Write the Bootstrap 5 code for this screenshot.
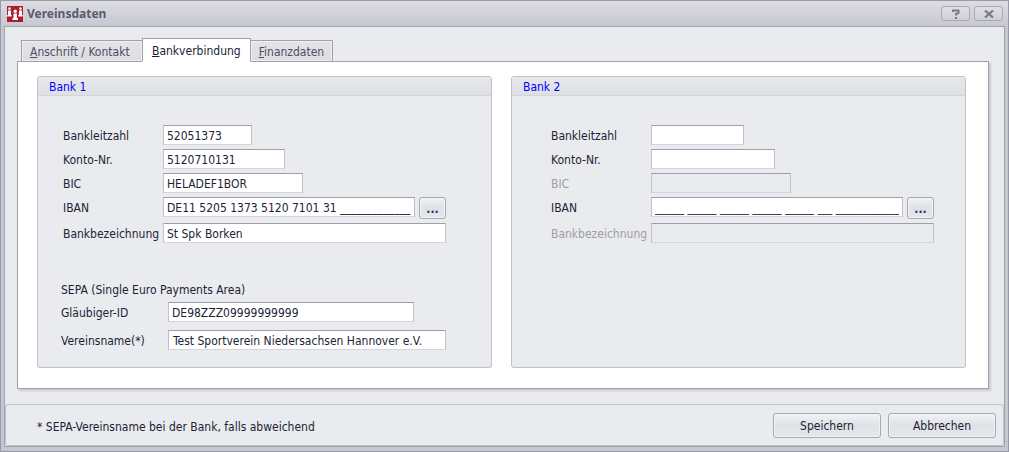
<!DOCTYPE html>
<html lang="de">
<head>
<meta charset="utf-8">
<meta name="viewport" content="width=device-width, initial-scale=1">
<title>Vereinsdaten</title>
<link href="https://cdn.jsdelivr.net/npm/bootstrap@5.3.0/dist/css/bootstrap.min.css" rel="stylesheet">
<style>
:root { --face: #eaebef; --ink: #201f35; --edge: #a0a0aa; --soft: #c0c2ca; }
body { font-family: "DejaVu Sans Condensed", "Noto Sans", sans-serif; font-size: 12px; line-height: 16px; color: var(--ink); background: #c8c9d2; }
.window { border: 1px solid #9a99a8; padding: 0 3px 4px; background: linear-gradient(#dcdce2, #c6c7d1 26px); }
.titlebar { height: 25px; padding: 0 2px 0 3px; color: #5b5b6e; }
.titlebar h1 { font-family: "Noto Sans", sans-serif; font-size: 12px; line-height: 16px; font-weight: 700; }
.caption-btn { width: 29px; height: 15px; padding: 0; border: 1px solid #a9a9b3; border-radius: 3px; background: linear-gradient(#dedee3, #cfd0d6); display: flex; align-items: center; justify-content: center; }
.client { background: var(--face); border: 1px solid #a3a3ae; }
.tabs-wrap { padding: 11px 15px 15px 12px; }
.page-tabs { border: 0; padding-left: 4px; margin-bottom: -1px; position: relative; z-index: 1; }
.page-tabs .nav-link { height: 22px; padding: 3px 8px 0; border: 1px solid var(--edge); border-left-width: 0; border-radius: 0; margin: 0; color: #4f4e60; background: linear-gradient(#e4e5e9, #dcdde2); box-shadow: inset 0 0 0 1px #f0f0f3; }
.page-tabs .nav-item:first-child .nav-link { border-left-width: 1px; min-width: 122px; }
.page-tabs .nav-link.active { height: 24px; color: var(--ink); background: #fff; border: 1px solid var(--edge); border-bottom-color: #fff; margin-left: -1px; padding: 4px 9px 0; box-shadow: none; }
.sheet { background: #fff; border: 1px solid var(--edge); box-shadow: 2px 2px 2px #c9cad0; padding: 14px 22px 20px 19px; }
.banks { gap: 19px; }
.bank { height: 100%; border: 1px solid var(--soft); border-radius: 3px; background: var(--face); }
.bank legend { font-size: 12px; line-height: 16px; color: #00f; padding: 2px 11px 0; margin: 0; border-bottom: 1px solid #d4d5da; background: linear-gradient(#e7e8eb, #dfe0e4); }
.bank-body { clear: both; padding: 29px 20px 16px 25px; }
.bank-second { padding-left: 39px; }
.field-label { width: 100px; flex: none; white-space: nowrap; line-height: 16px; padding-top: 1px; }
.iban-label { padding-top: 3px; }
.off { color: #9d9da8; }
.sepa { margin-left: -2px; padding-top: 39px; }
.sepa .field-label { width: 107px; }
.field { height: 20px; min-height: 0; padding: 1px 3px 0; border: 1px solid; border-color: #9d9ea8 var(--soft) #d4d5db; border-radius: 0; font-size: 12px; line-height: 17px; color: var(--ink); background: #fff; }
.field:disabled { background: var(--face); }
.mask { font-family: "Liberation Sans", sans-serif; font-size: 13px; }
.w-89 { width: 89px; } .w-93 { width: 93px; } .w-122 { width: 122px; } .w-124 { width: 124px; }
.w-140 { width: 140px; } .w-246 { width: 246px; } .w-252 { width: 252px; } .w-278 { width: 278px; } .w-283 { width: 283px; }
.push { font-size: 12px; line-height: 16px; padding: 0; color: var(--ink); border: 1px solid #a6a7b1; border-radius: 3px; background: linear-gradient(#f1f2f5, #dfe1e6 50%, #e6e7eb); box-shadow: inset 0 0 0 1px #f3f4f7; }
.push-wide { width: 108px; height: 25px; }
.push-dots { width: 27px; height: 22px; margin-left: 4px; padding-top: 2px; color: #1c3564; font-weight: 700; }
.actions { border: 1px solid var(--soft); border-radius: 3px; padding: 8px 7px 7px 31px; }
.actions-row { gap: 7px; }
.note { padding-top: 2px; }
</style>
</head>
<body>
<main class="window min-vh-100 d-flex flex-column">
  <header class="titlebar d-flex align-items-center gap-1">
    <svg width="16" height="16" viewBox="0 0 16 16" aria-hidden="true"><path fill="#ad1c2c" d="M0 0h16v16H0z"/><g fill="#fff"><circle cx="2.500" cy="2.600" r="1.300"/><path d="M1 4.500h3V9h.7v1.500H.3V9H1z"/><circle cx="13.500" cy="2.600" r="1.300"/><path d="M12 4.500h3V9h.7v1.500h-4.400V9h.7z"/><circle cx="8.200" cy="5.300" r="1.700"/><path d="M6.500 7.500h3.400V12h1.100v2H5.500v-2h1z"/></g></svg>
    <h1 class="m-0 flex-grow-1">Vereinsdaten</h1>
    <button class="caption-btn" type="button" aria-label="Hilfe"><svg width="8" height="10" viewBox="0 0 8 10"><path d="M1 3V1.500h5.500V4L4 5v1.500M4 8v2" stroke="#77798a" stroke-width="2" fill="none"/></svg></button>
    <button class="caption-btn" type="button" aria-label="Schließen"><svg width="10" height="8" viewBox="0 0 10 8"><path d="M1 .5l8 7M9 .5l-8 7" stroke="#77798a" stroke-width="2.200"/></svg></button>
  </header>
  <div class="client flex-grow-1 d-flex flex-column">
    <div class="tabs-wrap flex-grow-1 d-flex flex-column">
      <ul class="nav nav-tabs page-tabs align-items-end">
        <li class="nav-item"><a class="nav-link" href="#"><u>A</u>nschrift / Kontakt</a></li>
        <li class="nav-item"><a class="nav-link active" href="#" aria-current="page"><u>B</u>ankverbindung</a></li>
        <li class="nav-item"><a class="nav-link" href="#"><u>F</u>inanzdaten</a></li>
      </ul>
      <section class="sheet flex-grow-1 d-flex">
        <div class="banks d-flex flex-grow-1">
          <div class="col">
            <fieldset class="bank">
              <legend>Bank 1</legend>
              <div class="bank-body">
                <div class="d-flex flex-column gap-1">
                  <div class="d-flex align-items-center"><label class="field-label" for="blz1">Bankleitzahl</label><input class="field w-89" id="blz1" value="52051373"></div>
                  <div class="d-flex align-items-center"><label class="field-label" for="kto1">Konto-Nr.</label><input class="field w-122" id="kto1" value="5120710131"></div>
                  <div class="d-flex align-items-center"><label class="field-label" for="bic1">BIC</label><input class="field w-140" id="bic1" value="HELADEF1BOR"></div>
                  <div class="d-flex align-items-start"><label class="field-label iban-label" for="iban1">IBAN</label><input class="field w-252" id="iban1" value="DE11 5205 1373 5120 7101 31 _____________"><button class="btn push push-dots" type="button" aria-label="IBAN berechnen">...</button></div>
                  <div class="d-flex align-items-center"><label class="field-label" for="bez1">Bankbezeichnung</label><input class="field w-283" id="bez1" value="St Spk Borken"></div>
                </div>
                <div class="sepa">
                  <div class="mb-1">SEPA (Single Euro Payments Area)</div>
                  <div class="d-flex align-items-center mb-2"><label class="field-label" for="gid">Gläubiger-ID</label><input class="field w-246" id="gid" value="DE98ZZZ09999999999"></div>
                  <div class="d-flex align-items-center"><label class="field-label" for="vname">Vereinsname(*)</label><input class="field w-278 ps-1" id="vname" value="Test Sportverein Niedersachsen Hannover e.V."></div>
                </div>
              </div>
            </fieldset>
          </div>
          <div class="col">
            <fieldset class="bank">
              <legend>Bank 2</legend>
              <div class="bank-body bank-second">
                <div class="d-flex flex-column gap-1">
                  <div class="d-flex align-items-center"><label class="field-label" for="blz2">Bankleitzahl</label><input class="field w-93" id="blz2"></div>
                  <div class="d-flex align-items-center"><label class="field-label" for="kto2">Konto-Nr.</label><input class="field w-124" id="kto2"></div>
                  <div class="d-flex align-items-center"><label class="field-label off" for="bic2">BIC</label><input class="field w-140" id="bic2" disabled></div>
                  <div class="d-flex align-items-start"><label class="field-label iban-label" for="iban2">IBAN</label><input class="field mask w-252" id="iban2" value="____ ____ ____ ____ ____ __ _________"><button class="btn push push-dots" type="button" aria-label="IBAN berechnen">...</button></div>
                  <div class="d-flex align-items-center"><label class="field-label off" for="bez2">Bankbezeichnung</label><input class="field w-283" id="bez2" disabled></div>
                </div>
              </div>
            </fieldset>
          </div>
        </div>
      </section>
    </div>
    <footer class="actions d-flex align-items-center">
      <span class="note flex-grow-1">* SEPA-Vereinsname bei der Bank, falls abweichend</span>
      <div class="actions-row d-flex">
        <button class="btn push push-wide" type="button">Speichern</button>
        <button class="btn push push-wide" type="button">Abbrechen</button>
      </div>
    </footer>
  </div>
</main>
<script src="https://cdn.jsdelivr.net/npm/bootstrap@5.3.0/dist/js/bootstrap.bundle.min.js"></script>
</body>
</html>
